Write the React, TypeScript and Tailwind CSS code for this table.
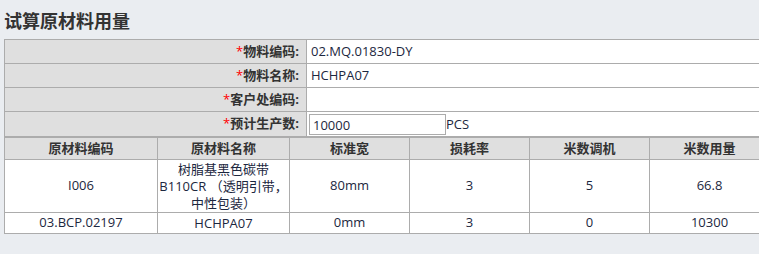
export default function App() {
  const fields = [
    { label: '物料编码', value: '02.MQ.01830-DY' },
    { label: '物料名称', value: 'HCHPA07' },
    { label: '客户处编码', value: '' },
  ];

  const rows = [
    { code: 'I006', name: ['树脂基黑色碳带', 'B110CR （透明引带，', '中性包装）'], width: '80mm', loss: '3', adjust: '5', usage: '66.8', tall: true },
    { code: '03.BCP.02197', name: ['HCHPA07'], width: '0mm', loss: '3', adjust: '0', usage: '10300', tall: false },
  ];

  const heads = ['原材料编码', '原材料名称', '标准宽', '损耗率', '米数调机', '米数用量'];

  return (
    <div
      className="w-[759px] h-[254px] overflow-hidden bg-[#eaedf1] pl-[4px] text-[13px] text-[#222]"
      style={{ fontFamily: '"Open Sans", "Noto Sans CJK SC", sans-serif' }}
    >
      <h1 className="h-[39px] pt-[9px] text-[18px] leading-[24px] font-bold text-[#333]">试算原材料用量</h1>

      {/* 表单 */}
      <div className="w-[765px] border-l border-t border-[#acacac]">
        {fields.map((f) => (
          <div key={f.label} className="grid grid-cols-[302px_1fr] h-[24px] border-b border-[#acacac]">
            <div className="bg-[#dfdfdf] border-r border-[#acacac] flex items-center justify-end pr-[7px] font-bold text-[#333]">
              <span className="text-[#ff0000] font-normal">*</span>
              {f.label}:
            </div>
            <div className="bg-white flex items-center pl-[4px] text-[#1c2740]">{f.value}</div>
          </div>
        ))}
        <div className="grid grid-cols-[302px_1fr] h-[25px] border-b border-[#acacac]">
          <div className="bg-[#dfdfdf] border-r border-[#acacac] flex items-center justify-end pr-[7px] font-bold text-[#333]">
            <span className="text-[#ff0000] font-normal">*</span>
            预计生产数:
          </div>
          <div className="bg-white flex items-center pl-[2px] pt-[1px] text-[#1c2740]">
            <input
              defaultValue="10000"
              className="w-[137px] h-[21px] border border-[#acacac] px-[3px] text-[13px] text-[#1c2740] outline-none"
            />
            <span>PCS</span>
          </div>
        </div>
      </div>

      {/* 明细 */}
      <div className="w-[765px] border-l border-t border-[#acacac]">
        <div className="grid grid-cols-[153px_132px_120px_120px_120px_120px] h-[22px] bg-[#dfdfdf] border-b border-[#acacac] font-bold text-[#333]">
          {heads.map((h) => (
            <div key={h} className="border-r border-[#acacac] flex items-center justify-center">{h}</div>
          ))}
        </div>
        {rows.map((r) => (
          <div
            key={r.code}
            className={`grid grid-cols-[153px_132px_120px_120px_120px_120px] bg-white border-b border-[#acacac] text-[#1c2740] ${r.tall ? 'h-[53px]' : 'h-[21px]'}`}
          >
            <div className="border-r border-[#acacac] flex items-center justify-center">{r.code}</div>
            <div className="border-r border-[#acacac] flex flex-col items-center justify-center leading-[17px] whitespace-nowrap">
              {r.name.map((line) => (
                <span key={line}>{line}</span>
              ))}
            </div>
            {[r.width, r.loss, r.adjust, r.usage].map((v, i) => (
              <div key={i} className="border-r border-[#acacac] flex items-center justify-center">
                {v}
              </div>
            ))}
          </div>
        ))}
      </div>
    </div>
  );
}
